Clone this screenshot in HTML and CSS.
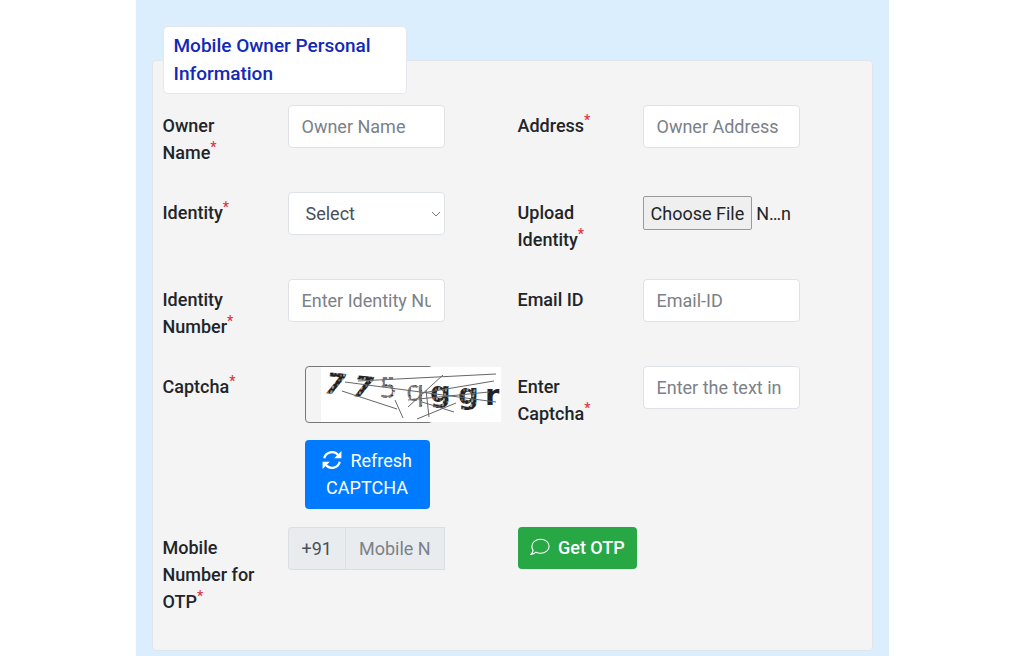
FILE: index.html
```html
<!DOCTYPE html>
<html lang="en">
<head>
    <meta charset="UTF-8">
    <meta name="viewport" content="width=device-width, initial-scale=1.0">
    <title>Mobile Owner Personal Information</title>
    <link rel="stylesheet" href="styles.css">
</head>
<body>
    <div class="container">
        <form class="panel">
            <h2 class="panel-title">Mobile Owner Personal Information</h2>

            <div class="form-row">
                <label for="owner-name">Owner Name<sup>*</sup></label>
                <div><input type="text" id="owner-name" class="form-control" placeholder="Owner Name"></div>
                <label for="address">Address<sup>*</sup></label>
                <div><input type="text" id="address" class="form-control" placeholder="Owner Address"></div>
            </div>

            <div class="form-row">
                <label for="identity">Identity<sup>*</sup></label>
                <div class="select-wrap">
                    <select id="identity" class="form-control">
                        <option>Select</option>
                    </select>
                    <svg class="chevron" viewBox="0 0 10 6" aria-hidden="true"><path d="M1 1l4 4 4-4"/></svg>
                </div>
                <label for="upload">Upload Identity<sup>*</sup></label>
                <div><input type="file" id="upload" class="form-file"></div>
            </div>

            <div class="form-row">
                <label for="identity-number">Identity Number<sup>*</sup></label>
                <div><input type="text" id="identity-number" class="form-control" placeholder="Enter Identity Number"></div>
                <label for="email">Email ID</label>
                <div><input type="email" id="email" class="form-control" placeholder="Email-ID"></div>
            </div>

            <div class="form-row">
                <div class="label">Captcha<sup>*</sup></div>
                <div class="captcha">
                    <div class="captcha-box">
                        <svg class="captcha-image" viewBox="0 0 180 55" role="img" aria-label="Captcha">
                            <defs>
                                <pattern id="speckle" width="7" height="5" patternUnits="userSpaceOnUse" patternTransform="rotate(12)">
                                    <rect width="7" height="5" fill="#222"/>
                                    <rect width="2" height="3" fill="#999"/>
                                    <rect x="4" y="2" width="2" height="2" fill="#666"/>
                                </pattern>
                                <pattern id="faint" width="6" height="5" patternUnits="userSpaceOnUse">
                                    <rect width="6" height="5" fill="#777"/>
                                    <rect width="2" height="3" fill="#ddd"/>
                                    <rect x="4" y="3" width="2" height="1" fill="#333"/>
                                </pattern>
                            </defs>
                            <rect width="180" height="55" fill="#fff"/>
                            <g class="captcha-text">
                                <text x="3" y="26" class="slanted" fill="url(#speckle)" transform="rotate(6 3 26)">7</text>
                                <text x="31" y="29" class="slanted" fill="url(#speckle)" transform="rotate(6 31 29)">7</text>
                                <text x="58" y="31" fill="url(#faint)">5</text>
                                <text x="85" y="34" fill="url(#faint)">q</text>
                                <text x="109" y="35" class="heavy" fill="url(#speckle)">g</text>
                                <text x="137" y="37" class="heavy" fill="url(#speckle)">g</text>
                                <text x="164" y="38" class="heavy" fill="#222">r</text>
                            </g>
                            <path class="captcha-lines" d="M37 14L175 7M24 15L175 35M21 24L76 42M74 33L82 51M87 40L122 8M101 26L173 14M96 52L135 36M105 23L108 50M87 33L168 25M101 35L133 45"/>
                        </svg>
                    </div>
                    <button type="button" class="btn btn-primary">
                        <svg class="icon" viewBox="0 0 18 18" aria-hidden="true">
                            <path class="stroke" d="M2 7.500A7.200 7.200 0 0 1 14.500 4.500M16 10.500A7.200 7.200 0 0 1 3.500 13.500"/>
                            <path class="solid" d="M17.500 1v6.500H11zM.5 17v-6.500H7z"/>
                        </svg>
                        Refresh CAPTCHA
                    </button>
                </div>
                <label for="captcha-text">Enter Captcha<sup>*</sup></label>
                <div><input type="text" id="captcha-text" class="form-control" placeholder="Enter the text in image"></div>
            </div>

            <div class="form-row">
                <label for="mobile">Mobile Number for OTP<sup>*</sup></label>
                <div class="input-group">
                    <span class="input-prefix">+91</span>
                    <input type="tel" id="mobile" class="form-control" placeholder="Mobile Number" disabled>
                </div>
                <div class="otp">
                    <button type="button" class="btn btn-success">
                        <svg class="icon" viewBox="0 0 18 18" aria-hidden="true">
                            <path class="thin" d="M9.500 2C14 2 17.200 4.900 17.200 8.300S14 14.600 9.500 14.600C8 14.600 6.600 14.300 5.400 13.700C4.200 14.900 2.600 15.700.9 15.700C2 14.500 2.700 13.200 2.800 12C2 10.900 1.700 9.700 1.700 8.300C1.700 4.900 5 2 9.500 2z"/>
                        </svg>
                        Get OTP
                    </button>
                </div>
            </div>
        </form>
    </div>
</body>
</html>
```
FILE: styles.css
```css
* {
    box-sizing: border-box;
}

body {
    margin: 0;
    background-color: #fff;
    color: #212529;
    font-family: Roboto, sans-serif;
    font-size: 18px;
    line-height: 27px;
}

.container {
    max-width: 753px;
    min-height: 100vh;
    margin: 0 auto;
    padding: 60px 16px 4px;
    background-color: #dbeefe;
}

.panel {
    padding: 0 10px 17px;
    background-color: #f4f4f4;
    border: 1px solid #dfe5ea;
    border-radius: 4px;
}

/* Title box sits over the top edge of the panel */
.panel-title {
    width: 244px;
    margin: -35px 0 11px;
    padding: 5px 10px;
    background-color: #fff;
    border: 1px solid #e4e8ec;
    border-radius: 5px;
    color: #1229b5;
    font-size: 19px;
    font-weight: 500;
    line-height: 28px;
}

.form-row {
    display: grid;
    grid-template-columns: 125fr 230fr 125fr 219fr;
    min-height: 69px;
    margin-bottom: 18px;
}

label,
.label {
    padding: 7px 20px 0 0;
    font-weight: 500;
}

sup {
    color: #dc3545;
    font-size: 14px;
    line-height: 0;
}

/* Fields */
.form-control {
    display: block;
    width: 100%;
    max-width: 157px;
    height: 43px;
    padding: 6px 13px;
    background-color: #fff;
    border: 1px solid #dee2e6;
    border-radius: 4px;
    color: #495057;
    font: inherit;
}

.form-control::placeholder {
    color: #7b8188;
    opacity: 1;
}

.select-wrap {
    position: relative;
    max-width: 157px;
}

select.form-control {
    appearance: none;
    padding-left: 17px;
}

.chevron {
    position: absolute;
    top: 19px;
    right: 4px;
    width: 10px;
    height: 6px;
    fill: none;
    stroke: #777;
    stroke-width: 1;
    pointer-events: none;
}

.form-file {
    width: 100%;
    max-width: 157px;
    margin-top: 4px;
    color: #212529;
    font: inherit;
}

.form-file::file-selector-button {
    height: 34px;
    margin-right: 4px;
    padding: 0 7px;
    background-color: #efefef;
    border: 1px solid #9a9a9a;
    border-radius: 2px;
    color: #212529;
    font: inherit;
}

.input-group {
    display: flex;
    align-items: flex-start;
    max-width: 157px;
}

.input-prefix {
    height: 43px;
    padding: 7px 13px;
    background-color: #e9ecef;
    border: 1px solid #dadfe3;
    border-right: none;
    border-radius: 4px 0 0 4px;
    color: #495057;
}

.input-group .form-control {
    flex: 1;
    min-width: 0;
    background-color: #e9ecef;
    border-color: #dadfe3;
    border-radius: 0;
}

/* Captcha */
.captcha {
    display: flex;
    flex-direction: column;
    align-items: flex-start;
    gap: 17px;
    padding-left: 17px;
}

.captcha-box {
    width: 128px;
    height: 57px;
    padding-left: 15px;
    border: 1px solid #777;
    border-radius: 4px;
}

.captcha-image {
    display: block;
    width: 180px;
    height: 55px;
}

.captcha-text {
    font-family: "DejaVu Sans", sans-serif;
    font-size: 29px;
}

.captcha-text .slanted {
    font-style: italic;
    font-weight: bold;
}

.captcha-text .heavy {
    font-weight: bold;
}

.captcha-lines {
    fill: none;
    stroke: #666;
    stroke-width: 1;
}

/* Buttons */
.btn {
    padding: 7px 12px 8px;
    border: none;
    border-radius: 4px;
    color: #fff;
    font: inherit;
    cursor: pointer;
}

.btn-primary {
    width: 125px;
    background-color: #007bff;
}

.btn-success {
    background-color: #28a745;
    font-weight: 500;
    white-space: nowrap;
}

.icon {
    width: 20px;
    height: 20px;
    margin-right: 4px;
    vertical-align: -3px;
    fill: none;
}

.icon .stroke {
    stroke: #fff;
    stroke-width: 2;
}

.icon .solid {
    fill: #fff;
}

.icon .thin {
    stroke: #fff;
    stroke-width: 1;
}
```
